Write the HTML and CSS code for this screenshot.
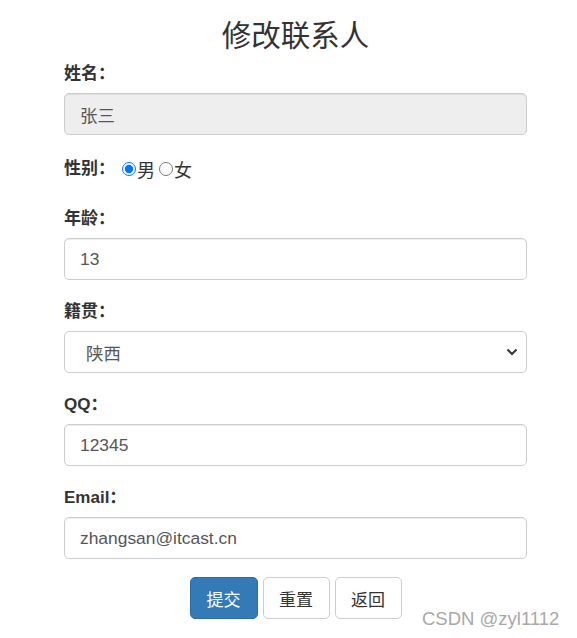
FILE: index.html
```html
<!DOCTYPE html>
<html lang="zh">
<head>
<meta charset="utf-8">
<title>修改联系人</title>
<link rel="stylesheet" href="styles.css">
</head>
<body>
<div class="container">
  <h3 class="title">修改联系人</h3>
  <form class="form">
    <div class="group">
      <label class="label">姓名：</label>
      <div class="control readonly">张三</div>
    </div>
    <div class="group sex">
      <label class="label">性别：</label>
      <span class="radios">
        <input type="radio" name="sex" checked><span class="opt">男</span><input type="radio" name="sex"><span class="opt">女</span>
      </span>
    </div>
    <div class="group">
      <label class="label">年龄：</label>
      <div class="control">13</div>
    </div>
    <div class="group">
      <label class="label">籍贯：</label>
      <div class="control select">
        <span class="sel-text">陕西</span>
        <svg class="chev" width="12" height="8" viewBox="0 0 12 8"><path d="M1.5 1.5 L6 6 L10.5 1.5" fill="none" stroke="#333" stroke-width="2"/></svg>
      </div>
    </div>
    <div class="group">
      <label class="label latin">QQ：</label>
      <div class="control">12345</div>
    </div>
    <div class="group">
      <label class="label latin">Email：</label>
      <div class="control">zhangsan@itcast.cn</div>
    </div>
    <div class="buttons">
      <span class="btn primary">提交</span>
      <span class="btn">重置</span>
      <span class="btn">返回</span>
    </div>
  </form>
</div>
<div class="watermark">CSDN @zyl1112</div>
</body>
</html>
```
FILE: styles.css
```css
html, body {
  margin: 0;
  padding: 0;
  background: #fff;
}
body {
  width: 577px;
  height: 638px;
  position: relative;
  overflow: hidden;
  font-family: "Liberation Sans", "Noto Sans CJK SC", sans-serif;
  color: #333;
  font-size: 17px;
}
.container {
  margin-left: 64px;
  width: 463px;
}
.title {
  margin: 13px 0 8px;
  height: 40px;
  line-height: 40px;
  text-align: center;
  font-size: 29.5px;
  font-weight: normal;
  color: #333;
  font-family: "Noto Sans CJK SC", sans-serif;
}
.form {
  display: flex;
  flex-direction: column;
}
.group {
  display: flex;
  flex-direction: column;
  margin-bottom: 19px;
}
.label {
  display: block;
  height: 26px;
  line-height: 26px;
  font-weight: bold;
  font-size: 17px;
  margin-bottom: 6px;
  color: #333;
}
.control {
  box-sizing: border-box;
  height: 42px;
  border: 1px solid #ccc;
  border-radius: 5px;
  padding: 0 15px;
  display: flex;
  align-items: center;
  color: #555;
  font-size: 17.4px;
  box-shadow: inset 0 1px 1px rgba(0,0,0,0.075);
}
.readonly {
  background: #eee;
}
.select {
  justify-content: space-between;
  padding-left: 21px;
  padding-right: 8px;
  box-shadow: none;
}
.chev {
  display: block;
}
.sex {
  flex-direction: row;
  align-items: center;
  height: 30px;
  margin-bottom: 22px;
}
.sex .label {
  margin-bottom: 0;
  width: 57px;
}
.radios {
  display: flex;
  align-items: center;
  font-size: 18px;
  color: #333;
}
.radios input {
  margin: 0 1px 0 1px;
  width: 14px;
  height: 14px;
}
.opt {
  margin-right: 3px;
}
.buttons {
  display: flex;
  justify-content: center;
  gap: 5px;
  margin-top: -1px;
}
.btn {
  box-sizing: border-box;
  height: 42px;
  width: 67px;
  display: flex;
  align-items: center;
  justify-content: center;
  border: 1px solid #ccc;
  border-radius: 5px;
  background: #fff;
  color: #333;
  font-size: 17px;
}
.btn.primary {
  background: #337ab7;
  border-color: #2e6da4;
  color: #fff;
  width: 68px;
}
.watermark {
  position: absolute;
  left: 422px;
  top: 608px;
  font-size: 18.5px;
  color: #a8a8a8;
  font-family: "Liberation Sans", sans-serif;
}
```
